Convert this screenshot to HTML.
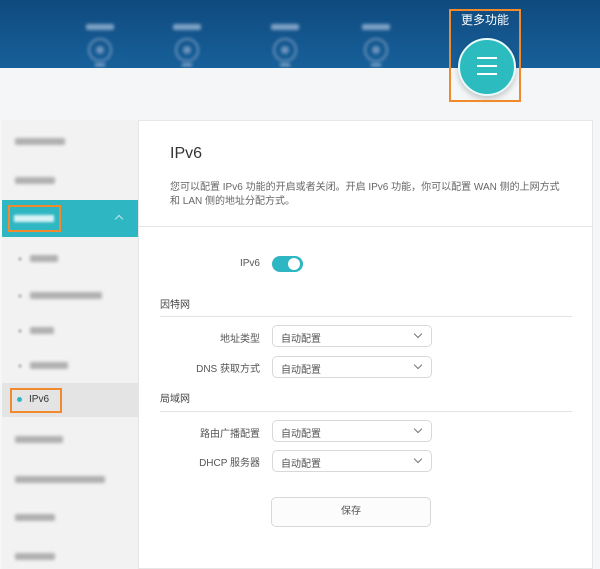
<!DOCTYPE html>
<html><head><meta charset="utf-8"><style>
*{margin:0;padding:0;box-sizing:border-box}
body{width:600px;height:569px;overflow:hidden;background:#f5f6f7;font-family:"Liberation Sans","Noto Sans CJK SC",sans-serif;position:relative;color:#333}
.a{position:absolute}
.hdr{left:0;top:0;width:600px;height:68px;background:linear-gradient(#0f4a7e,#17609a)}
.blur{filter:blur(1.5px)}
.nav{width:40px;text-align:center}
.nav .t{height:6px;width:28px;margin:24px auto 8px;background:#7fa2c6;border-radius:2px}
.nav .c{width:24px;height:24px;border:2px solid #6d93bb;border-radius:50%;margin:0 auto;position:relative}
.nav .c:after{content:"";position:absolute;left:6px;top:6px;width:8px;height:8px;background:#6d93bb;border-radius:50%}
.nav .u{width:10px;height:2px;background:#aac4de;margin:2px auto 0}
.side{left:2px;top:120px;width:136px;height:449px;background:#f2f2f2}
.main{left:138px;top:120px;width:455px;height:449px;background:#fff;border:1px solid #e6e6e6}
.sb{height:7px;background:#b0b0b0;border-radius:2px;filter:blur(1.6px)}
.dot{width:4px;height:4px;border-radius:50%;background:#c8c8c8;filter:blur(.8px)}
.lbl{font-size:10px;color:#555;text-align:right;width:120px}
.sel{left:272px;width:160px;height:22px;border:1px solid #d8d8d8;border-radius:5px;font-size:10px;padding:4px 8px;color:#555}
.sel:after{content:"";position:absolute;right:10px;top:5px;width:5px;height:5px;border-right:1.3px solid #777;border-bottom:1.3px solid #777;transform:rotate(45deg)}
.ln{left:160px;width:412px;height:1px;background:#e2e2e2}
.sec{left:160px;font-size:10px;color:#444}
.or{border:2px solid #f08a2c}
</style></head><body>
<div class="a hdr"></div>
<div class="a nav blur" style="left:80px;top:0"><div class="t"></div><div class="c"></div><div class="u"></div></div>
<div class="a nav blur" style="left:167px;top:0"><div class="t"></div><div class="c"></div><div class="u"></div></div>
<div class="a nav blur" style="left:265px;top:0"><div class="t"></div><div class="c"></div><div class="u"></div></div>
<div class="a nav blur" style="left:356px;top:0"><div class="t"></div><div class="c"></div><div class="u"></div></div>
<div class="a" style="left:461px;top:11px;color:#fff;font-size:12px">更多功能</div>
<div class="a" style="left:458px;top:38px;width:58px;height:58px;border-radius:50%;background:#2cbcc0;border:2px solid #e8fafa;box-shadow:0 3px 6px rgba(0,0,0,.2)"></div>
<div class="a" style="left:477px;top:57px;width:20px;height:2px;background:#fff"></div>
<div class="a" style="left:477px;top:65px;width:20px;height:2px;background:#fff"></div>
<div class="a" style="left:477px;top:73px;width:20px;height:2px;background:#fff"></div>
<div class="a or" style="left:449px;top:9px;width:72px;height:93px"></div>

<div class="a side"></div>
<div class="a sb" style="left:15px;top:138px;width:50px"></div>
<div class="a sb" style="left:15px;top:177px;width:40px"></div>
<div class="a" style="left:2px;top:200px;width:136px;height:37px;background:#2fb6c3"></div>
<div class="a" style="left:14px;top:215px;width:40px;height:7px;background:#d8f2f4;filter:blur(1.3px)"></div>
<div class="a" style="left:116px;top:216px;width:6px;height:6px;border-left:1px solid #bfeaee;border-top:1px solid #bfeaee;transform:rotate(45deg)"></div>
<div class="a or" style="left:8px;top:205px;width:53px;height:27px"></div>
<div class="a dot" style="left:18px;top:257px"></div>
<div class="a dot" style="left:18px;top:294px"></div>
<div class="a dot" style="left:18px;top:329px"></div>
<div class="a dot" style="left:18px;top:364px"></div>
<div class="a sb" style="left:30px;top:255px;width:28px"></div>
<div class="a sb" style="left:30px;top:292px;width:72px"></div>
<div class="a sb" style="left:30px;top:327px;width:24px"></div>
<div class="a sb" style="left:30px;top:362px;width:38px"></div>
<div class="a" style="left:2px;top:383px;width:136px;height:34px;background:#e4e4e4"></div>
<div class="a" style="left:17px;top:397px;width:5px;height:5px;border-radius:50%;background:#2fb6c3"></div>
<div class="a" style="left:29px;top:394px;font-size:10px;color:#333">IPv6</div>
<div class="a or" style="left:10px;top:388px;width:52px;height:25px"></div>
<div class="a sb" style="left:15px;top:436px;width:48px"></div>
<div class="a sb" style="left:15px;top:476px;width:90px"></div>
<div class="a sb" style="left:15px;top:514px;width:40px"></div>
<div class="a sb" style="left:15px;top:553px;width:40px"></div>

<div class="a main"></div>
<div class="a" style="left:170px;top:145px;font-size:16px;color:#333">IPv6</div>
<div class="a" style="left:170px;top:181px;font-size:10px;color:#666;line-height:14px;width:420px">您可以配置 IPv6 功能的开启或者关闭。开启 IPv6 功能，你可以配置 WAN 侧的上网方式<br>和 LAN 侧的地址分配方式。</div>
<div class="a" style="left:139px;top:226px;width:453px;height:1px;background:#e6e6e6"></div>
<div class="a lbl" style="left:140px;top:258px">IPv6</div>
<div class="a" style="left:272px;top:256px;width:31px;height:16px;border-radius:8px;background:#2fb6c3"></div>
<div class="a" style="left:288px;top:258px;width:12px;height:12px;border-radius:50%;background:#fff"></div>
<div class="a sec" style="top:296px">因特网</div>
<div class="a ln" style="top:316px"></div>
<div class="a lbl" style="left:140px;top:330px">地址类型</div>
<div class="a sel" style="top:325px">自动配置</div>
<div class="a lbl" style="left:140px;top:360px">DNS 获取方式</div>
<div class="a sel" style="top:356px">自动配置</div>
<div class="a sec" style="top:390px">局域网</div>
<div class="a ln" style="top:411px"></div>
<div class="a lbl" style="left:140px;top:425px">路由广播配置</div>
<div class="a sel" style="top:420px">自动配置</div>
<div class="a lbl" style="left:140px;top:454px">DHCP 服务器</div>
<div class="a sel" style="top:450px">自动配置</div>
<div class="a" style="left:271px;top:497px;width:160px;height:30px;border:1px solid #d8d8d8;border-radius:5px;font-size:10px;color:#555;text-align:center;line-height:28px;background:#fcfcfc">保存</div>
</body></html>
